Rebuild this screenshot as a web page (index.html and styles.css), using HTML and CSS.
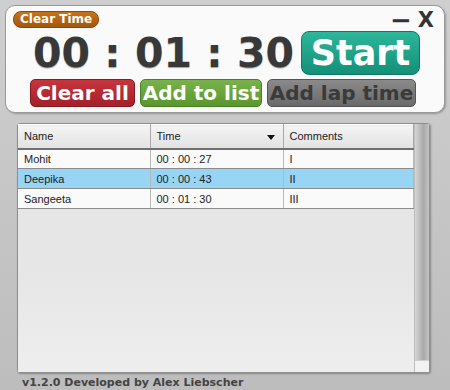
FILE: index.html
```html
<!DOCTYPE html>
<html lang="en">
<head>
    <meta charset="UTF-8">
    <title>Stopwatch</title>
    <link rel="stylesheet" href="styles.css">
</head>
<body>
    <div class="window">
        <div class="panel">
            <div class="panel-top">
                <button class="clear-time">Clear Time</button>
                <div class="win-controls">
                    <span class="min">&minus;</span>
                    <span class="close">X</span>
                </div>
            </div>
            <div class="timer-row">
                <div class="timer">00 : 01 : 30</div>
                <button class="start-btn">Start</button>
            </div>
            <div class="action-row">
                <button class="btn btn-red">Clear all</button>
                <button class="btn btn-green">Add to list</button>
                <button class="btn btn-gray">Add lap time</button>
            </div>
        </div>

        <div class="list">
            <div class="list-body">
                <table class="laps">
                    <thead>
                        <tr>
                            <th class="col-name">Name</th>
                            <th class="col-time">Time <span class="sort"></span></th>
                            <th class="col-comment">Comments</th>
                        </tr>
                    </thead>
                    <tbody>
                        <tr><td>Mohit</td><td>00 : 00 : 27</td><td>I</td></tr>
                        <tr class="selected"><td>Deepika</td><td>00 : 00 : 43</td><td>II</td></tr>
                        <tr><td>Sangeeta</td><td>00 : 01 : 30</td><td>III</td></tr>
                    </tbody>
                </table>
            </div>
            <div class="scrollbar">
                <div class="thumb"></div>
            </div>
        </div>

        <div class="footer">v1.2.0 Developed by Alex Liebscher</div>
    </div>
</body>
</html>
```

FILE: styles.css
```css
* {
    margin: 0;
    padding: 0;
    box-sizing: border-box;
}

body {
    width: 450px;
    height: 390px;
    overflow: hidden;
    background: linear-gradient(#cfcfcf, #bdbdbd);
    font-family: 'DejaVu Sans', Verdana, sans-serif;
}

.window {
    padding: 5px 5px 0 5px;
}

.panel {
    height: 108px;
    background: #fafafa;
    border: 1px solid #9a9a9a;
    border-radius: 10px;
    box-shadow: 1px 1px 2px rgba(0, 0, 0, 0.25);
    padding: 4px 10px 0 6px;
}

.panel-top {
    display: flex;
    justify-content: space-between;
    align-items: flex-start;
    height: 20px;
}

.clear-time {
    background: linear-gradient(#c8731a, #a5570c);
    color: #fff;
    border: 1px solid #8a4a08;
    border-radius: 8px;
    font-family: 'DejaVu Sans', sans-serif;
    font-weight: bold;
    font-size: 12px;
    height: 17px;
    padding: 0 6px;
    line-height: 15px;
    margin: 1px 0 0 1px;
}

.win-controls {
    display: flex;
    align-items: center;
    gap: 6px;
    height: 16px;
    font-weight: bold;
    color: #333;
    font-size: 21px;
    line-height: 16px;
    margin-top: 2px;
}

.win-controls .min {
    font-size: 26px;
}

.timer-row {
    display: flex;
    align-items: center;
    height: 46px;
}

.timer {
    font-weight: bold;
    font-size: 41px;
    line-height: 44px;
    color: #383838;
    text-shadow: 0 1px 1px rgba(0, 0, 0, 0.35);
    margin-left: 21px;
    white-space: nowrap;
}

.start-btn {
    margin-left: 7px;
    width: 119px;
    height: 44px;
    background: linear-gradient(#2db69a, #149077);
    border: 1px solid #0f7a64;
    border-radius: 8px;
    color: #fff;
    font-family: 'DejaVu Sans', sans-serif;
    font-weight: bold;
    font-size: 35px;
    line-height: 38px;
}

.action-row {
    display: flex;
    gap: 5px;
    margin-top: 3px;
    padding-left: 18px;
}

.btn {
    height: 28px;
    border-radius: 5px;
    font-family: 'DejaVu Sans', sans-serif;
    font-weight: bold;
    font-size: 20px;
    line-height: 26px;
    padding: 0;
    white-space: nowrap;
}

.btn-red {
    width: 105px;
    background: linear-gradient(#c8343c, #a3212a);
    border: 1px solid #861a21;
    color: #fff;
}

.btn-green {
    width: 122px;
    background: linear-gradient(#79b24a, #5a962e);
    border: 1px solid #4b7f25;
    color: #fff;
}

.btn-gray {
    width: 149px;
    background: linear-gradient(#8a8a8a, #6a6a6a);
    border: 1px solid #555;
    color: #3a3a3a;
}

.list {
    display: flex;
    margin: 10px 15px 0 12px;
    height: 250px;
    border: 1px solid #8e8e8e;
    border-radius: 3px;
    background: #e8e8e8;
    box-shadow: 1px 1px 2px rgba(0, 0, 0, 0.3);
}

.list-body {
    flex: 1;
    background: linear-gradient(#e6e6e6 60%, #eeeeee);
}

.laps {
    width: 100%;
    border-collapse: collapse;
    font-family: 'Liberation Sans', Arial, sans-serif;
    font-size: 11px;
    color: #222;
}

.laps th {
    height: 24px;
    text-align: left;
    font-weight: normal;
    padding: 0 6px;
    background: linear-gradient(#f4f4f4, #e2e2e2);
    border-right: 1px solid #a8a8a8;
    border-bottom: 2px solid #707070;
    border-top: 1px solid #fff;
}

.laps td {
    height: 20px;
    padding: 0 6px;
    background: #fafafa;
    border-right: 1px solid #b8b8b8;
    border-bottom: 1px solid #8c8c8c;
}

.laps .col-name {
    width: 132px;
}

.laps .col-time {
    width: 133px;
    position: relative;
}

/* sort arrow drawn as a css triangle */
.sort {
    position: absolute;
    right: 8px;
    top: 10px;
    width: 0;
    height: 0;
    border-left: 4px solid transparent;
    border-right: 4px solid transparent;
    border-top: 5px solid #111;
}

.laps tr.selected td {
    background: #98d4f4;
}

.scrollbar {
    width: 15px;
    border-left: 1px solid #bdbdbd;
    background: linear-gradient(to right, #d6d6d6, #a9a9a9 60%, #c4c4c4);
    display: flex;
    flex-direction: column;
    justify-content: flex-end;
}

.thumb {
    height: 12px;
    background: #f2f2f2;
    border-top: 1px solid #d0d0d0;
}

.footer {
    margin: 3px 0 0 17px;
    font-weight: bold;
    font-size: 11px;
    color: #444;
}
```
